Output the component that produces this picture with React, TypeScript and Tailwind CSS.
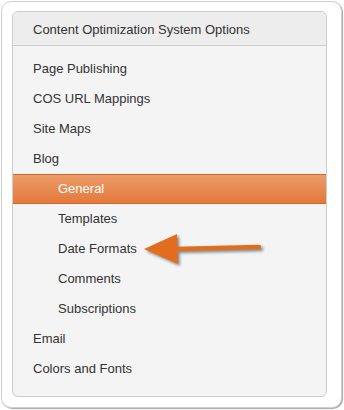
import React from "react";

const items: { label: string; sub?: boolean; active?: boolean }[] = [
  { label: "Page Publishing" },
  { label: "COS URL Mappings" },
  { label: "Site Maps" },
  { label: "Blog" },
  { label: "General", sub: true, active: true },
  { label: "Templates", sub: true },
  { label: "Date Formats", sub: true },
  { label: "Comments", sub: true },
  { label: "Subscriptions", sub: true },
  { label: "Email" },
  { label: "Colors and Fonts" },
];

export default function App() {
  return (
    <div
      className="relative w-[344px] h-[410px] bg-white pl-[1px] pt-[1px]"
      style={{ fontFamily: '"Liberation Sans", Arial, sans-serif' }}
    >
      <div className="w-[341px] h-[407px] rounded-[10px] border border-[#cfcfcf] bg-white shadow-[1px_1px_1px_rgba(0,0,0,0.35)] pl-[10px] pt-[9px]">
        <div className="w-[315px] h-[386px] rounded-[6px] border border-[#cccccc] bg-[#f4f4f4] overflow-hidden">
          <div className="bg-[#ededed] border-b border-[#cccccc] pt-[8px] pb-[5px] pl-[20px] text-[13px] leading-[20px] text-[#333]">
            Content Optimization System Options
          </div>
          <div className="pt-[8px] flex flex-col">
            {items.map((it) =>
              it.active ? (
                <div
                  key={it.label}
                  className="h-[30px] flex items-center pl-[45px] text-[13px] text-white border-t border-b border-[#d8682a] bg-gradient-to-b from-[#ec9c69] to-[#e3793a]"
                >
                  {it.label}
                </div>
              ) : (
                <div
                  key={it.label}
                  className={
                    "h-[30px] flex items-center text-[13px] text-[#333] " +
                    (it.sub ? "pl-[45px]" : "pl-[20px]")
                  }
                >
                  {it.label}
                </div>
              )
            )}
          </div>
        </div>
      </div>
      <svg
        className="absolute left-0 top-0 pointer-events-none"
        width="344"
        height="410"
        style={{ filter: "drop-shadow(2px 2px 1.5px rgba(0,0,0,0.45))" }}
      >
        <line
          x1="174"
          y1="249"
          x2="259"
          y2="247"
          stroke="#e26d1f"
          strokeWidth="4.5"
          strokeLinecap="round"
        />
        <polygon points="144,249 177,234 178,264" fill="#e26d1f" />
      </svg>
    </div>
  );
}
